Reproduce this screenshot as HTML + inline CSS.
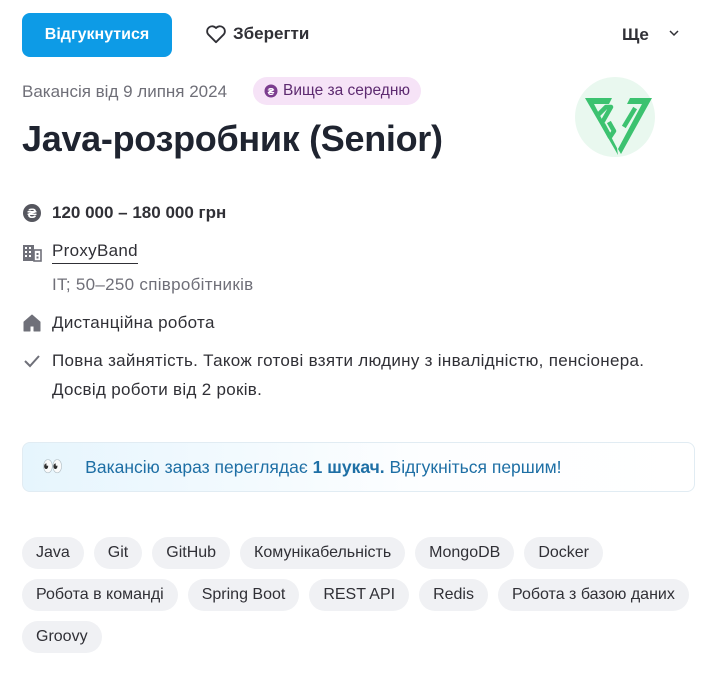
<!DOCTYPE html>
<html><head><meta charset="utf-8"><style>
*{box-sizing:border-box;margin:0;padding:0}
body{width:722px;height:676px;background:#fff;font-family:"Liberation Sans",sans-serif;color:#303036;position:relative;overflow:hidden}
.abs{position:absolute}
.btn{left:22px;top:13px;width:150px;height:44px;background:#0d9be6;border-radius:8px;color:#fff;font-weight:bold;font-size:16px;text-align:center;line-height:44px}
.save{left:205px;top:24px;font-size:17px;font-weight:bold;color:#303036;display:flex;align-items:center;gap:6px}
.more{left:622px;top:25px;font-size:17px;font-weight:bold;color:#303036}
.date{left:22px;top:82px;font-size:17px;color:#6f6f78}
.badge{left:253px;top:77px;height:28px;padding:0 11px;background:#f6e3f7;border-radius:14px;font-size:15.5px;color:#5d2a70;display:flex;align-items:center;gap:5px}
h1{position:absolute;left:22px;top:118px;font-size:36px;font-weight:bold;color:#1f2430;letter-spacing:-0.3px}
.row{position:absolute;left:22px;font-size:17px;letter-spacing:0.3px;color:#303036;display:flex;align-items:center}
.ic{width:20px;margin-right:10px;display:flex;justify-content:center}
.tags{position:absolute;left:22px;top:537px;width:690px;display:flex;flex-wrap:wrap;gap:10px 10px}
.tag{height:32px;line-height:32px;padding:0 14px;background:#f0f1f4;border-radius:16px;font-size:16px;color:#303036}
.note{left:22px;top:442px;width:673px;height:50px;border:1px solid #e1ecf3;border-radius:8px;background:linear-gradient(90deg,#e6f5fd,#fdfeff 60%,#fff);font-size:17.5px;color:#1e6fa5;display:flex;align-items:center}
</style></head><body>
<div class="abs btn">Відгукнутися</div>
<div class="abs save"><svg width="22" height="20" viewBox="0 0 24 22"><path d="M12 20 L3.5 11.5 A5 5 0 0 1 12 4.5 A5 5 0 0 1 20.5 11.5 Z" fill="none" stroke="#303036" stroke-width="2" stroke-linejoin="round"/></svg>Зберегти</div>
<div class="abs more">Ще <svg width="12" height="8" viewBox="0 0 12 8" style="margin-left:14px;vertical-align:3px"><path d="M2 2 L6 6 L10 2" fill="none" stroke="#303036" stroke-width="1.5"/></svg></div>
<div class="abs date">Вакансія від 9 липня 2024</div>
<div class="abs badge"><svg width="14" height="14" viewBox="0 0 14 14"><circle cx="7" cy="7" r="6.5" fill="#7b3c8e"/><text x="7" y="11" font-size="10" text-anchor="middle" fill="#fff" font-family="Liberation Sans" font-weight="bold">₴</text></svg>Вище за середню</div>
<h1>Java-розробник (Senior)</h1>
<svg class="abs" style="left:575px;top:77px" width="80" height="80" viewBox="0 0 80 80"><circle cx="40" cy="40" r="40" fill="#e9f8ef"/>
<g fill="#3cc270">
<polygon points="10,21 37,21 34,27 19,27 42,71 43,78"/>
<polygon points="55,21 77,21 46,77 43,72 67,27 52,27"/>
</g>
<g fill="none" stroke="#3cc270" stroke-width="4.5" stroke-linejoin="round" stroke-linecap="square">
<path d="M24,37 L31,30 L36,30 L28,44"/>
<path d="M29,49 L35,60 L39,54 L35,47"/>
<path d="M59,33 L50,48"/>
</g></svg>
<div class="row" style="top:203px;font-weight:bold;font-size:17px;letter-spacing:0"><span class="ic"><svg width="20" height="20" viewBox="0 0 20 20"><circle cx="10" cy="10" r="9" fill="#55565e"/><text x="10" y="15" font-size="14" font-weight="bold" text-anchor="middle" fill="#fff" font-family="Liberation Sans">₴</text></svg></span>120 000 – 180 000 грн</div>
<div class="row" style="top:241px"><span class="ic"><svg width="20" height="18" viewBox="0 0 20 18"><rect x="1" y="1" width="11" height="16" fill="#6f7079"/><rect x="12" y="6" width="7" height="11" fill="none" stroke="#6f7079" stroke-width="1.6"/><g fill="#fff"><rect x="3" y="3" width="2" height="2"/><rect x="7" y="3" width="2" height="2"/><rect x="3" y="7" width="2" height="2"/><rect x="7" y="7" width="2" height="2"/><rect x="3" y="11" width="2" height="2"/><rect x="7" y="11" width="2" height="2"/></g><rect x="14.5" y="9" width="2" height="2" fill="#6f7079"/><rect x="14.5" y="12.5" width="2" height="2" fill="#6f7079"/></svg></span><span style="border-bottom:1px solid #303036;padding-bottom:2px">ProxyBand</span></div>
<div class="row" style="top:275px;left:52px;color:#6f6f78">IT; 50–250 співробітників</div>
<div class="row" style="top:313px"><span class="ic"><svg width="18" height="18" viewBox="0 0 18 18"><path d="M1 8 L9 1 L17 8 V17 H11 V12 H7 V17 H1 Z" fill="#6f7079" stroke="#6f7079" stroke-linejoin="round"/></svg></span>Дистанційна робота</div>
<div class="row" style="top:346px;align-items:flex-start;line-height:29px"><span class="ic"><svg width="18" height="29" viewBox="0 0 18 29"><path d="M2 15 L7 20 L16 10" fill="none" stroke="#6f7079" stroke-width="2"/></svg></span><span>Повна зайнятість. Також готові взяти людину з інвалідністю, пенсіонера.<br>Досвід роботи від 2 років.</span></div>
<div class="abs note"><span style="margin-left:19px;margin-right:22px;font-size:17px">👀</span><span>Вакансію зараз переглядає <b>1 шукач.</b> Відгукніться першим!</span></div>
<div class="tags">
<span class="tag">Java</span><span class="tag">Git</span><span class="tag">GitHub</span><span class="tag">Комунікабельність</span><span class="tag">MongoDB</span><span class="tag">Docker</span>
<span class="tag">Робота в команді</span><span class="tag">Spring Boot</span><span class="tag">REST API</span><span class="tag">Redis</span><span class="tag">Робота з базою даних</span>
<span class="tag">Groovy</span>
</div>
</body></html>
